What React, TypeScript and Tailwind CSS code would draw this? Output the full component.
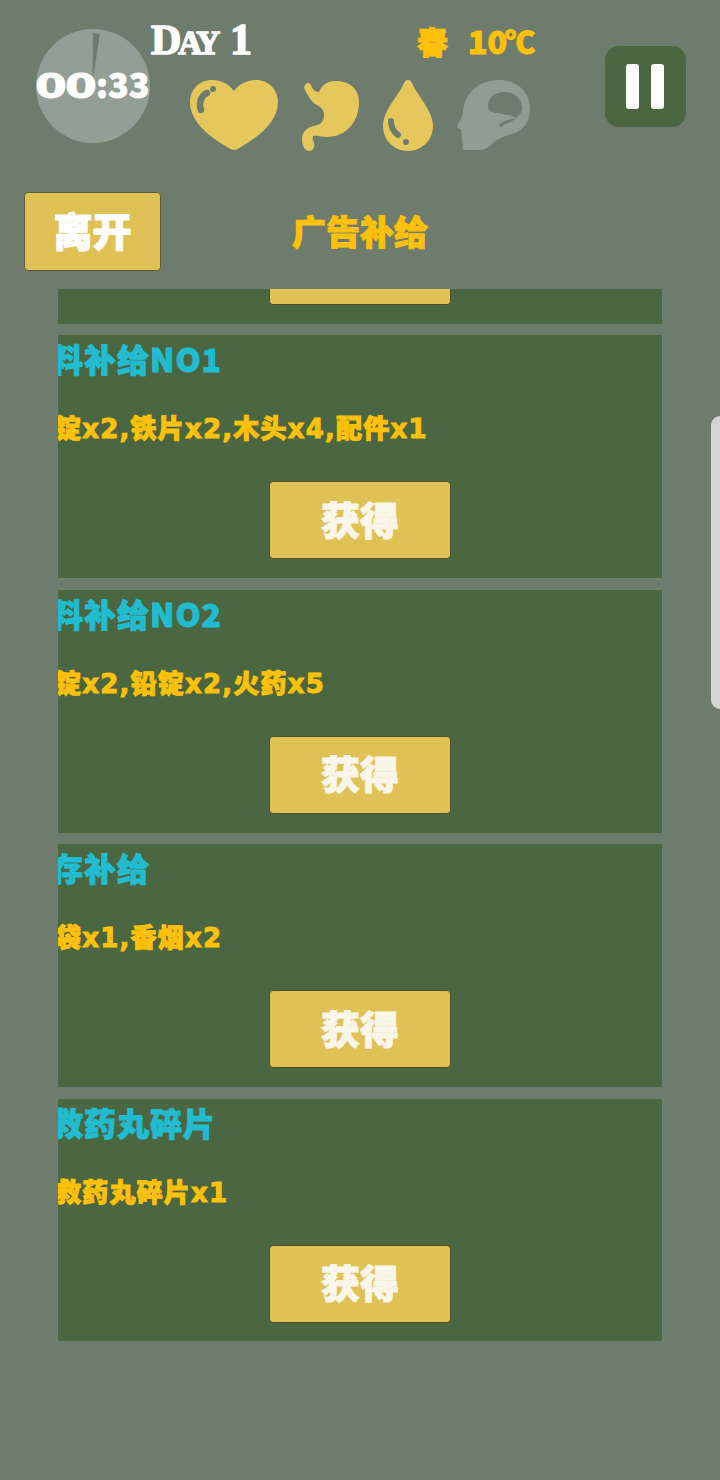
const cjk = "font-['Noto_Sans_CJK_SC','Noto_Sans',sans-serif] font-black";
const mixed = "font-['DejaVu_Sans','Noto_Sans_CJK_SC',sans-serif] font-black";

const items = [
  { title: "料补给NO1", desc: "锭x2,铁片x2,木头x4,配件x1" },
  { title: "料补给NO2", desc: "锭x2,铅锭x2,火药x5" },
  { title: "存补给", desc: "袋x1,香烟x2" },
  { title: "救药丸碎片", desc: "救药丸碎片x1" },
];

function GetButton() {
  return (
    <button className={`w-[182px] h-[78px] rounded-[4px] bg-[#e0c155] border border-[#4f4f2c] text-[39px] leading-none text-[#fbf6ea] [-webkit-text-stroke:1.2px_#fbf6ea] pb-[4px] ${cjk}`}>
      获得
    </button>
  );
}

function Card({ title, desc }: { title: string; desc: string }) {
  return (
    <div className="h-[243px] shrink-0 bg-[#4a6741] overflow-hidden flex flex-col">
      <div className={`h-[46px] -ml-[7px] whitespace-nowrap flex items-center text-[32px] tracking-[1px] leading-none text-[#22bcd0] [-webkit-text-stroke:1px_#22bcd0] ${cjk}`}>
        {title}
      </div>
      <div className={`mt-[30px] h-[36px] -ml-[3px] whitespace-nowrap flex items-center text-[26px] tracking-[1.2px] leading-none text-[#ffc107] [-webkit-text-stroke:1px_#ffc107] ${mixed}`}>
        {desc}
      </div>
      <div className="mt-[34px] flex justify-center">
        <GetButton />
      </div>
    </div>
  );
}

function Clock() {
  return (
    <div className="relative w-[114px] h-[114px] rounded-full bg-[#939f96] mt-[29px] shrink-0">
      <svg className="absolute inset-0" width="114" height="114" viewBox="0 0 114 114">
        <path d="M57 4 L64 5 L56.500 52 Z" fill="#6d7a6c" />
      </svg>
      <div className="absolute left-0 top-[39px] h-[36px] flex items-center whitespace-nowrap leading-none text-white">
        <span className="inline-block w-[30px] text-center scale-x-[1.35] text-[34px] leading-none font-['DejaVu_Sans',sans-serif] font-bold [-webkit-text-stroke:0.8px_white]">0</span>
        <span className="inline-block w-[30px] text-center scale-x-[1.35] text-[34px] leading-none font-['DejaVu_Sans',sans-serif] font-bold [-webkit-text-stroke:0.8px_white]">0</span>
        <span className={`mb-[4px] text-[34px] leading-none [-webkit-text-stroke:0.8px_white] ${cjk}`}>:33</span>
      </div>
    </div>
  );
}

const Y = "#e6c75b";
const BG = "#6e7c6d";

function Heart() {
  return (
    <svg width="88" height="70" viewBox="0 0 88 70">
      <path d="M44 70 C42 70 40 69 37 67 C20 57 0 42 0 22 C0 9 10 0 22 0 C31 0 39 4 44 11 C49 4 57 0 66 0 C78 0 88 9 88 22 C88 42 68 57 51 67 C48 69 46 70 44 70 Z" fill={Y} />
      <path d="M11 30 C8 22 12 15 17 13" fill="none" stroke={BG} strokeWidth="6.500" strokeLinecap="round" />
      <circle cx="23" cy="9" r="3" fill={BG} />
    </svg>
  );
}

function Stomach() {
  return (
    <svg width="58" height="71" viewBox="0 0 58 71">
      <path d="M3 5 C5 2 8 3 9 5 C10 9 13 12 17 12 C20 5 25 1 33 1 C47 1 57 8 57 22 C57 42 44 57 25 57 C20 57 15 55 11 56 C10 58 11 60 12 63 C13 67 11 71 7 71 C3 71 0 66 0 59 C0 51 6 47 12 46 C18 45 22 42 22 35 C22 30 19 27 15 25 C9 22 5 14 3 10 C2 8 2 6 3 5 Z" fill={Y} />
    </svg>
  );
}

function Drop() {
  return (
    <svg width="52" height="71" viewBox="0 0 52 71">
      <path d="M26 0 C28 0 29 1 30 3 C34 14 51 30 51 46 C51 60 40 71 26 71 C12 71 1 60 1 46 C1 30 18 14 22 3 C23 1 24 0 26 0 Z" fill={Y} />
      <path d="M9 41 C9 47 12 52 16 55" fill="none" stroke={BG} strokeWidth="6" strokeLinecap="round" />
      <circle cx="24" cy="62" r="3" fill={BG} />
    </svg>
  );
}

function Head() {
  return (
    <svg width="74" height="71" viewBox="0 0 74 71">
      <path fillRule="evenodd" d="M23 70 L6 70 C5 62 5 55 4 49 C1 49 -1 47 1 44 C3 41 5 38 6 33 C6 14 22 0 42 0 C60 0 73 12 73 29 C73 42 66 50 58 53 C48 56 42 58 36 63 C32 67 28 70 23 70 Z M31 26 C31 17 38 12 47 12 C58 12 65 19 65 28 C65 32 62 36 59 38 C55 35 46 34 40 33 C35 33 31 31 31 26 Z M59 38 C53 39 46 41 42 45 C42 48 44 47 46 46 C50 43 55 42 59 38 Z" fill="#8f9d92" />
    </svg>
  );
}

function Pause() {
  return (
    <div className="w-[81px] h-[81px] rounded-[14px] bg-[#4a6741] flex items-center justify-center gap-[12px] pr-[1px] shrink-0">
      <div className="w-[13px] h-[45px] rounded-[3px] bg-white" />
      <div className="w-[13px] h-[45px] rounded-[3px] bg-white" />
    </div>
  );
}

export default function App() {
  return (
    <div className="relative w-[720px] h-[1480px] overflow-hidden bg-[#6e7c6d]">
      <header className="h-[192px] flex items-start pl-[36px]">
        <Clock />
        <div className="ml-[1px] w-[440px] flex flex-col">
          <div className="h-[80px] flex items-start">
            <div className="w-[266px] mt-[18px] flex items-baseline font-['Liberation_Serif',serif] font-bold leading-none text-white [-webkit-text-stroke:1.5px_white] whitespace-nowrap">
              <span className="text-[42px] leading-none">D</span>
              <span className="text-[33px] leading-none -ml-[3px] -tracking-[3px]">AY</span>
              <span className="text-[44px] leading-none ml-[13px]">1</span>
            </div>
            <div className={`mt-[24px] flex items-center whitespace-nowrap leading-none text-[#ffc107] [-webkit-text-stroke:1px_#ffc107] ${cjk}`}>
              <span className="text-[31px] leading-none">春</span>
              <span className="ml-[20px] text-[32px] leading-none">10</span>
              <span className="-ml-[2px] text-[30px] leading-none">℃</span>
            </div>
          </div>
          <div className="ml-[39px] flex items-start">
            <Heart />
            <div className="ml-[24px]"><Stomach /></div>
            <div className="ml-[22px]"><Drop /></div>
            <div className="ml-[23px]"><Head /></div>
          </div>
        </div>
        <div className="ml-[14px] mt-[46px]">
          <Pause />
        </div>
      </header>

      <div className="relative h-[97px] pl-[24px]">
        <button className={`w-[137px] h-[79px] rounded-[4px] bg-[#e0c155] border border-[#5d5c38] text-[39px] leading-none text-white [-webkit-text-stroke:1.2px_white] pb-[4px] ${cjk}`}>
          离开
        </button>
        <div className={`absolute left-0 right-0 top-[22px] text-center text-[34px] leading-none text-[#ffc107] [-webkit-text-stroke:1px_#ffc107] ${cjk}`}>
          广告补给
        </div>
      </div>

      <div className="mx-[58px] h-[1052px] overflow-hidden">
        <div className="flex flex-col gap-[11.5px] -mt-[208.5px]">
          <Card title="" desc="" />
          {items.map((it) => (
            <Card key={it.title} title={it.title} desc={it.desc} />
          ))}
        </div>
      </div>

      <div className="absolute left-[711px] top-[416px] w-[9px] h-[293px] rounded-l-[12px] bg-[#d3d6d0]" />
    </div>
  );
}
